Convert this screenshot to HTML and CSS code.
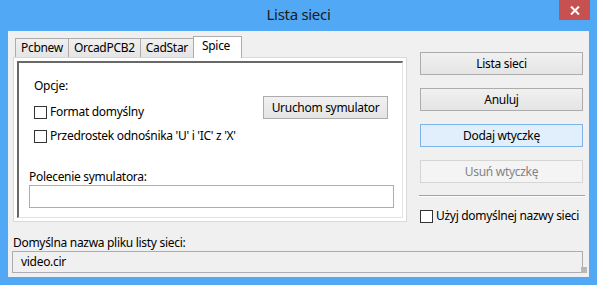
FILE: index.html
```html
<!DOCTYPE html>
<html lang="pl">
<head>
    <meta charset="UTF-8">
    <meta name="viewport" content="width=device-width, initial-scale=1.0">
    <title>Lista sieci</title>
    <link rel="stylesheet" href="styles.css">
</head>
<body>
    <div class="window">
        <header class="titlebar">
            <span></span>
            <h1 class="title">Lista sieci</h1>
            <button class="close" aria-label="Zamknij">
                <svg width="10" height="9" viewBox="0 0 10 9">
                    <path d="M1 0.5 L9 8.5 M9 0.5 L1 8.5" stroke="#fff" stroke-width="2"/>
                </svg>
            </button>
        </header>
        <div class="client">
            <div class="main">
                <div class="notebook">
                    <div class="tabs">
                        <div class="tab">Pcbnew</div>
                        <div class="tab">OrcadPCB2</div>
                        <div class="tab">CadStar</div>
                        <div class="tab active">Spice</div>
                    </div>
                    <div class="page">
                        <div class="page-inner">
                            <div class="opts">
                                <div class="opts-left">
                                    <div class="caption">Opcje:</div>
                                    <label class="check"><span class="box"></span>Format domyślny</label>
                                    <label class="check"><span class="box"></span>Przedrostek odnośnika 'U' i 'IC' z 'X'</label>
                                </div>
                                <button class="btn sim">Uruchom symulator</button>
                            </div>
                            <div class="cmd">
                                <div class="caption">Polecenie symulatora:</div>
                                <div class="field"></div>
                            </div>
                        </div>
                    </div>
                </div>
                <div class="side">
                    <button class="btn">Lista sieci</button>
                    <button class="btn">Anuluj</button>
                    <button class="btn focus">Dodaj wtyczkę</button>
                    <button class="btn" disabled>Usuń wtyczkę</button>
                    <div class="sep"></div>
                    <label class="check"><span class="box"></span>Użyj domyślnej nazwy sieci</label>
                </div>
            </div>
            <div class="default-name">
                <div class="caption">Domyślna nazwa pliku listy sieci:</div>
                <div class="field readonly">video.cir</div>
                <span class="grip"></span>
            </div>
        </div>
    </div>
</body>
</html>
```

FILE: styles.css
```css
* {
    box-sizing: border-box;
    margin: 0;
    padding: 0;
}
body {
    background-color: #51a9f5;
    color: #000;
    font-family: 'Noto Sans', 'Open Sans', sans-serif;
    font-size: 12px;
    line-height: 16px;
    letter-spacing: -0.3px;
}
.window {
    width: 597px;
    height: 285px;
    background-color: #51a9f5;
    display: flex;
    flex-direction: column;
}
.titlebar {
    height: 31px;
    display: grid;
    grid-template-columns: 1fr auto 1fr;
    align-items: start;
}
.title {
    font-size: 15px;
    font-weight: 400;
    line-height: 28px;
    color: #1a1a1a;
}
.close {
    justify-self: end;
    width: 31px;
    height: 20px;
    margin-right: 7px;
    border: none;
    background-color: #c75050;
    display: flex;
    align-items: center;
    justify-content: center;
}
.client {
    margin: 0 8px;
    height: 246px;
    background-color: #f0f0f0;
    padding: 5px 6px 0 5px;
    position: relative;
}
.main {
    display: flex;
    gap: 13px;
}
.notebook {
    width: 394px;
}
.tabs {
    display: flex;
    align-items: flex-end;
    height: 21px;
    padding-left: 2px;
}
.tab {
    height: 19px;
    padding: 0 5px;
    border: 1px solid #acacac;
    border-bottom: none;
    margin-right: -1px;
    background: linear-gradient(#f0f0f0, #e5e5e5);
    line-height: 17px;
}
.tab.active {
    height: 22px;
    margin-bottom: -1px;
    background: #fff;
    padding: 0 11px 0 8px;
    line-height: 17px;
    position: relative;
    z-index: 1;
}
.page {
    height: 165px;
    border: 1px solid #d9d9d9;
    background-color: #fff;
    padding: 3px;
}
.page-inner {
    height: 100%;
    border-top: 2px solid #696969;
    border-left: 2px solid #696969;
    border-right: 1px solid #e3e3e3;
    border-bottom: 1px solid #e3e3e3;
    padding: 15px 8px 9px 10px;
    display: flex;
    flex-direction: column;
}
.opts {
    display: flex;
    justify-content: space-between;
    padding: 0 6px 0 5px;
}
.opts-left {
    display: flex;
    flex-direction: column;
    gap: 8px;
}
.opts-left .caption {
    margin-bottom: 2px;
}
.check {
    display: flex;
    align-items: center;
    gap: 3px;
    height: 16px;
    white-space: nowrap;
}
.box {
    width: 13px;
    height: 13px;
    border: 1px solid #333;
    background-color: #fff;
}
.btn {
    height: 23px;
    border: 1px solid #acacac;
    background: linear-gradient(#f0f0f0, #e5e5e5);
    font: inherit;
    letter-spacing: inherit;
    color: #000;
}
.btn.sim {
    width: 125px;
    margin-top: 18px;
}
.btn.focus {
    border-color: #7eb4ea;
    background: #e1eefb;
}
.btn:disabled {
    border-color: #d5d5d5;
    background: #f4f4f4;
    color: #838383;
}
.cmd {
    margin-top: auto;
}
.field {
    height: 23px;
    border: 1px solid #abadb3;
    background-color: #fff;
}
.side {
    width: 163px;
    margin-top: 16px;
    display: flex;
    flex-direction: column;
    gap: 13px;
}
.sep {
    height: 2px;
    border-top: 1px solid #a0a0a0;
    border-bottom: 1px solid #fff;
    margin: -1px -2px 0 -1px;
}
.side .check {
    margin-top: -2px;
}
.default-name {
    margin-top: 11px;
}
.field.readonly {
    margin-left: -1px;
    height: 22px;
    background-color: #f0f0f0;
    padding-left: 8px;
    line-height: 20px;
}
.grip {
    position: absolute;
    right: 2px;
    bottom: 4px;
    width: 6px;
    height: 6px;
    background-image: radial-gradient(circle, #b8b8b8 0.8px, transparent 1px);
    background-size: 2px 2px;
}
```
